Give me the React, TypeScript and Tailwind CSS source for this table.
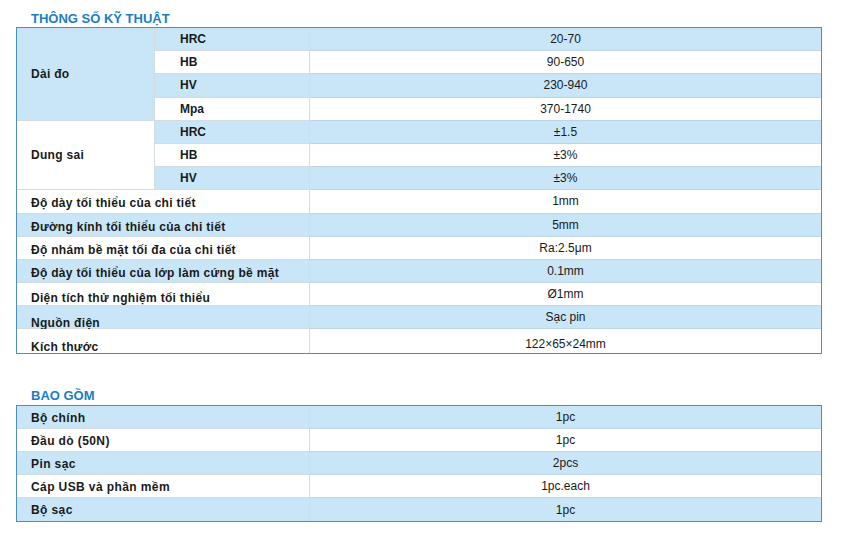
import React from "react";

const font = { fontFamily: '"Liberation Sans", Arial, sans-serif' };

type Row = { label: string; value: string; lift?: string; vlift?: string };

const ranges = [
  { key: "HRC", value: "20-70" },
  { key: "HB", value: "90-650" },
  { key: "HV", value: "230-940" },
  { key: "Mpa", value: "370-1740" },
];

const tolerances = [
  { key: "HRC", value: "±1.5" },
  { key: "HB", value: "±3%" },
  { key: "HV", value: "±3%" },
];

const specs: Row[] = [
  { label: "Độ dày tối thiểu của chi tiết", value: "1mm", lift: "pt-[3px]" },
  { label: "Đường kính tối thiểu của chi tiết", value: "5mm", lift: "pt-[4px]" },
  { label: "Độ nhám bề mặt tối đa của chi tiết", value: "Ra:2.5μm", lift: "pt-[4px]" },
  { label: "Độ dày tối thiểu của lớp làm cứng bề mặt", value: "0.1mm", lift: "pt-[5px]" },
  { label: "Diện tích thử nghiệm tối thiểu", value: "Ø1mm", lift: "pt-[7px]" },
  { label: "Nguồn điện", value: "Sạc pin", lift: "pt-[11px]" },
  { label: "Kích thước", value: "122×65×24mm", lift: "pt-[12px]", vlift: "pt-[6px]" },
];

const included = [
  { label: "Bộ chính", value: "1pc" },
  { label: "Đầu dò (50N)", value: "1pc" },
  { label: "Pin sạc", value: "2pcs" },
  { label: "Cáp USB và phần mềm", value: "1pc.each" },
  { label: "Bộ sạc", value: "1pc" },
];

const blue = "bg-[#c8e6f8]";
const white = "bg-white";
const line = "border-b border-[#bdd5e6]";
const vline = "border-r border-[#d3dce2]";

function Title({ children }: { children: React.ReactNode }) {
  return (
    <div className="flex h-[17px] items-center pl-[31px] text-[13px] font-bold text-[#1b7ec3]">
      {children}
    </div>
  );
}

export default function App() {
  let n = 0;
  const bg = () => (n++ % 2 === 0 ? blue : white);

  return (
    <div style={font} className="min-h-[534px] w-[844px] bg-white pt-[10px] text-[12px] text-[#1a1a1a]">
      <Title>THÔNG SỐ KỸ THUẬT</Title>

      <div className="ml-[16px] w-[806px] border-[1.5px] border-[#4a8fc8]">
        <div className="grid grid-cols-[138px_155px_1fr] auto-rows-[23.2px]">
          <div className={`row-span-4 flex items-center pl-[14px] font-bold tracking-[0.3px] ${blue} ${line} ${vline}`}>
            Dài đo
          </div>
          {ranges.map((r) => {
            const c = bg();
            return (
              <React.Fragment key={"r" + r.key}>
                <div className={`flex items-center pl-[25px] font-bold ${c} ${line} ${vline}`}>{r.key}</div>
                <div className={`flex items-center justify-center ${c} ${line}`}>{r.value}</div>
              </React.Fragment>
            );
          })}

          <div className={`row-span-3 flex items-center pl-[14px] font-bold tracking-[0.3px] ${white} ${line} ${vline}`}>
            Dung sai
          </div>
          {tolerances.map((r) => {
            const c = bg();
            return (
              <React.Fragment key={"t" + r.key}>
                <div className={`flex items-center pl-[25px] font-bold ${c} ${line} ${vline}`}>{r.key}</div>
                <div className={`flex items-center justify-center ${c} ${line}`}>{r.value}</div>
              </React.Fragment>
            );
          })}

          {specs.map((r, i) => {
            const c = bg();
            const last = i === specs.length - 1;
            return (
              <React.Fragment key={r.label}>
                <div
                  className={`col-span-2 flex items-center pl-[14px] font-bold tracking-[0.3px] ${r.lift ?? ""} ${c} ${vline} ${last ? "" : line}`}
                >
                  {r.label}
                </div>
                <div className={`flex items-center justify-center ${r.vlift ?? ""} ${c} ${last ? "" : line}`}>
                  {r.value}
                </div>
              </React.Fragment>
            );
          })}
        </div>
      </div>

      <div className="mt-[34px]">
        <Title>BAO GỒM</Title>
      </div>

      <div className="ml-[16px] w-[806px] border-[1.5px] border-[#4a8fc8]">
        <div className="grid grid-cols-[293px_1fr] auto-rows-[23px]">
          {included.map((r, i) => {
            const c = i % 2 === 0 ? blue : white;
            const last = i === included.length - 1;
            return (
              <React.Fragment key={r.label}>
                <div className={`flex items-center pl-[14px] pt-[2px] font-bold tracking-[0.4px] ${c} ${vline} ${last ? "" : line}`}>
                  {r.label}
                </div>
                <div className={`flex items-center justify-center pt-[1px] ${c} ${last ? "" : line}`}>{r.value}</div>
              </React.Fragment>
            );
          })}
        </div>
      </div>
    </div>
  );
}
